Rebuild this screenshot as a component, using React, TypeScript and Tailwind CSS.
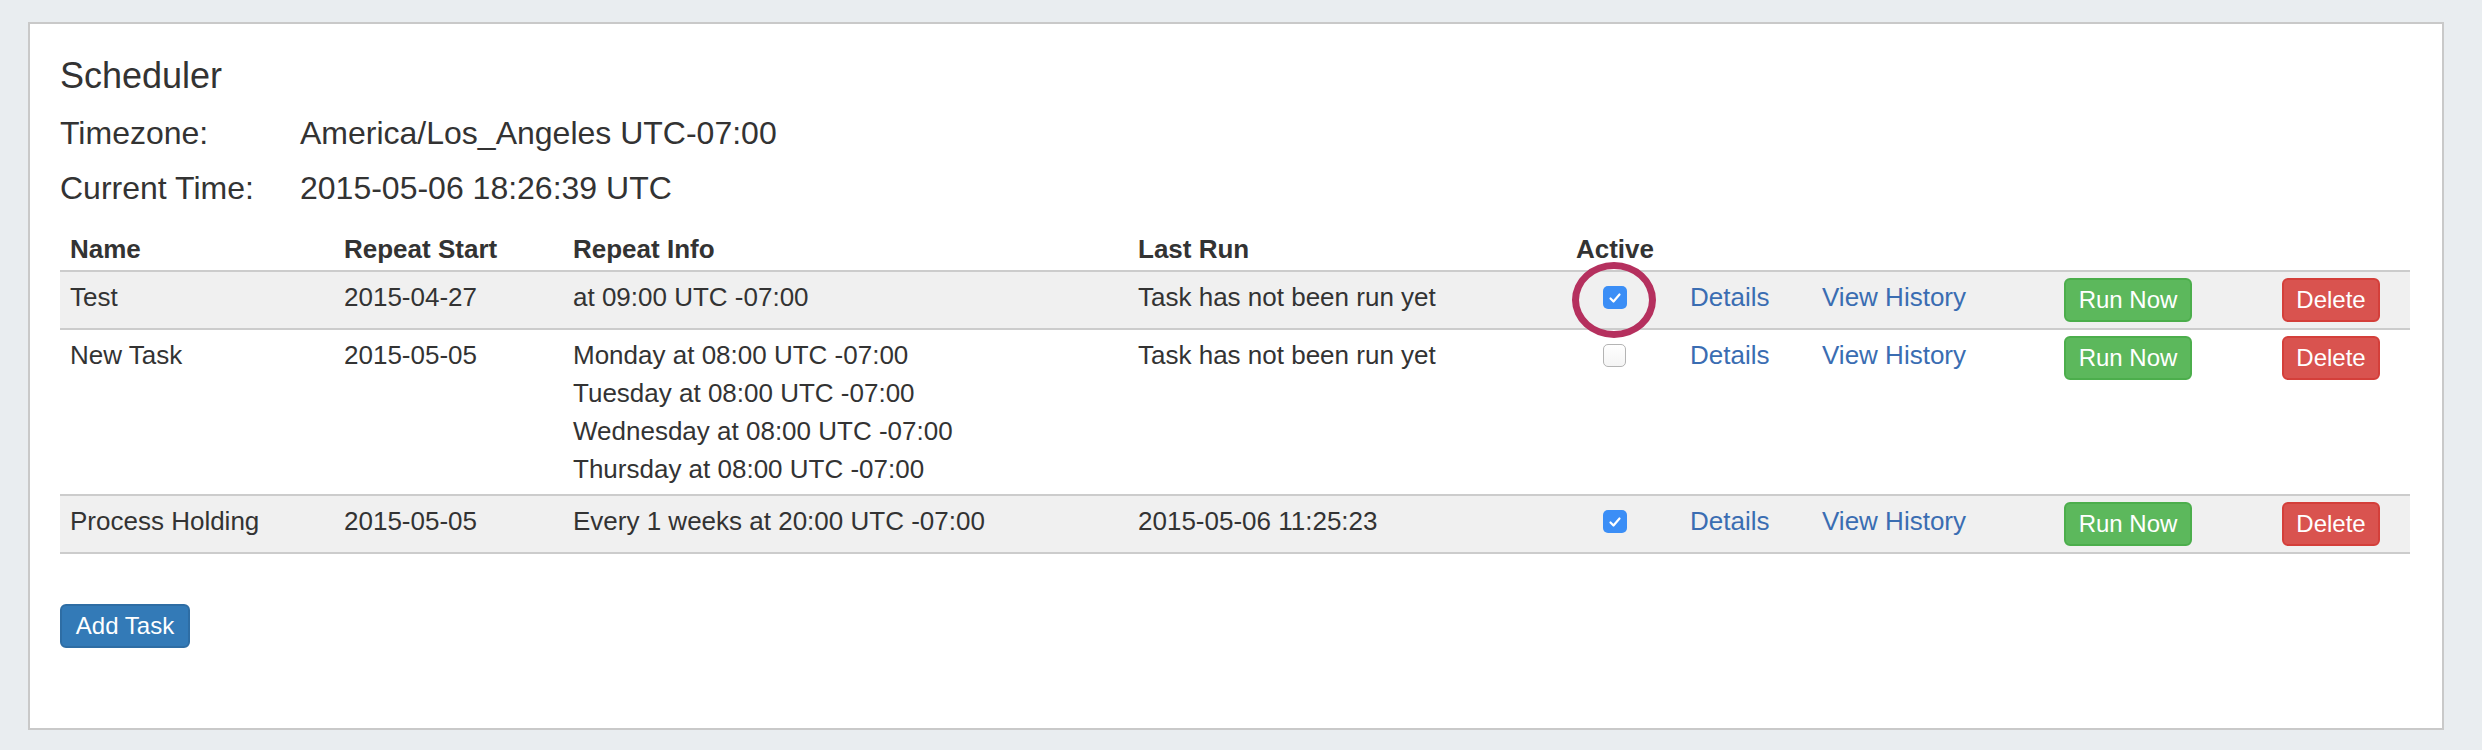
const tasks = [
  {
    name: "Test",
    start: "2015-04-27",
    info: ["at 09:00 UTC -07:00"],
    lastRun: "Task has not been run yet",
    active: true,
    marked: true,
    striped: true,
  },
  {
    name: "New Task",
    start: "2015-05-05",
    info: [
      "Monday at 08:00 UTC -07:00",
      "Tuesday at 08:00 UTC -07:00",
      "Wednesday at 08:00 UTC -07:00",
      "Thursday at 08:00 UTC -07:00",
    ],
    lastRun: "Task has not been run yet",
    active: false,
    marked: false,
    striped: false,
  },
  {
    name: "Process Holding",
    start: "2015-05-05",
    info: ["Every 1 weeks at 20:00 UTC -07:00"],
    lastRun: "2015-05-06 11:25:23",
    active: true,
    marked: false,
    striped: true,
  },
];

function Checkbox({ checked, marked }: { checked: boolean; marked: boolean }) {
  return (
    <div className="relative mx-auto mt-[8px] h-[23px] w-[24px]">
      {checked ? (
        <div className="flex h-[23px] w-[24px] items-center justify-center rounded-[5px] bg-[#3b8ef6]">
          <svg width="16" height="16" viewBox="0 0 16 16" fill="none">
            <path d="M3.5 8.5 L6.5 11.5 L12.5 4.5" stroke="white" strokeWidth="2.2" strokeLinecap="round" strokeLinejoin="round" />
          </svg>
        </div>
      ) : (
        <div className="h-[23px] w-[23px] rounded-[5px] border-[1.5px] border-[#b4b4b4] bg-gradient-to-b from-white to-[#f4f4f4]" />
      )}
      {marked && (
        <div className="pointer-events-none absolute -left-[31px] -top-[24px] h-[76px] w-[84px] rounded-[50%] border-[7px] border-[#b5305e]" />
      )}
    </div>
  );
}

export default function App() {
  return (
    <div
      className="min-h-[750px] bg-[#e9edf0] pl-[28px] pr-[38px] pt-[22px] text-[#333333]"
      style={{ fontFamily: '"Liberation Sans", Arial, sans-serif' }}
    >
      <div className="border-2 border-[#c9c9c9] bg-white pb-[80px] pl-[30px] pr-[32px] pt-[32px]">
        <h3 className="text-[36px] leading-[40px]">Scheduler</h3>
        <div className="mt-[10px] grid grid-cols-[240px_1fr] text-[32px] leading-[55px]">
          <div>Timezone:</div>
          <div>America/Los_Angeles UTC-07:00</div>
          <div>Current Time:</div>
          <div>2015-05-06 18:26:39 UTC</div>
        </div>

        <table className="w-[2350px] table-fixed border-collapse text-[26px] leading-[38px]">
          <colgroup>
            <col className="w-[274px]" />
            <col className="w-[229px]" />
            <col className="w-[565px]" />
            <col className="w-[440px]" />
            <col className="w-[112px]" />
            <col className="w-[134px]" />
            <col className="w-[242px]" />
            <col className="w-[218px]" />
            <col className="w-[136px]" />
          </colgroup>
          <thead>
            <tr className="border-b-2 border-[#cccccc] text-left font-bold">
              <th className="pb-[2px] pl-[10px] pt-[14px]">Name</th>
              <th className="pb-[2px] pl-[10px] pt-[14px]">Repeat Start</th>
              <th className="pb-[2px] pl-[10px] pt-[14px]">Repeat Info</th>
              <th className="pb-[2px] pl-[10px] pt-[14px]">Last Run</th>
              <th className="pb-[2px] pr-[18px] pt-[14px] text-center">Active</th>
              <th />
              <th />
              <th />
              <th />
            </tr>
          </thead>
          <tbody>
            {tasks.map((t) => (
              <tr
                key={t.name}
                className={`border-b-2 border-[#cccccc] align-top ${t.striped ? "bg-[#f0f0f0]" : "bg-white"}`}
              >
                <td className="py-[6px] pl-[10px]">{t.name}</td>
                <td className="py-[6px] pl-[10px]">{t.start}</td>
                <td className="py-[6px] pl-[10px]">
                  {t.info.map((line) => (
                    <div key={line}>{line}</div>
                  ))}
                </td>
                <td className="py-[6px] pl-[10px]">{t.lastRun}</td>
                <td className="py-[6px] pr-[18px]">
                  <Checkbox checked={t.active} marked={t.marked} />
                </td>
                <td className="py-[6px] pl-[10px] text-[#3a6db2]">Details</td>
                <td className="py-[6px] pl-[8px] text-[#3a6db2]">View History</td>
                <td className="py-[6px] pl-[8px]">
                  <button className="h-[44px] w-[128px] rounded-[6px] border-2 border-[#4cae4c] bg-[#5cb85c] text-[24px] text-white">
                    Run Now
                  </button>
                </td>
                <td className="py-[6px] pl-[8px]">
                  <button className="h-[44px] w-[98px] rounded-[6px] border-2 border-[#d43f3a] bg-[#d9534f] text-[24px] text-white">
                    Delete
                  </button>
                </td>
              </tr>
            ))}
          </tbody>
        </table>

        <button className="mt-[50px] h-[44px] w-[130px] rounded-[6px] border-2 border-[#2e6da4] bg-[#337ab7] text-[24px] text-white">
          Add Task
        </button>
      </div>
    </div>
  );
}
